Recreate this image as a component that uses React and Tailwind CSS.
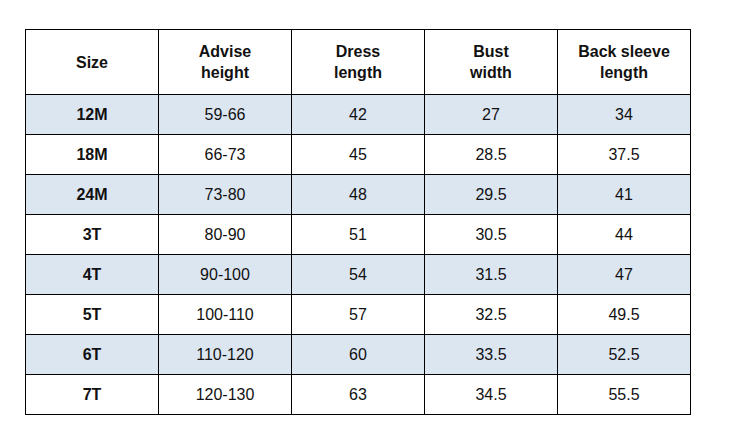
import React from "react";

const rows = [
  ["12M", "59-66", "42", "27", "34"],
  ["18M", "66-73", "45", "28.5", "37.5"],
  ["24M", "73-80", "48", "29.5", "41"],
  ["3T", "80-90", "51", "30.5", "44"],
  ["4T", "90-100", "54", "31.5", "47"],
  ["5T", "100-110", "57", "32.5", "49.5"],
  ["6T", "110-120", "60", "33.5", "52.5"],
  ["7T", "120-130", "63", "34.5", "55.5"],
];

const headers = [["Size"], ["Advise", "height"], ["Dress", "length"], ["Bust", "width"], ["Back sleeve", "length"]];

export default function App() {
  return (
    <div className="w-[739px] h-[441px] bg-white pt-[29px] pl-[25px]" style={{ fontFamily: '"Liberation Sans", Arial, sans-serif' }}>
      <div className="grid grid-cols-[133px_133px_133px_133px_133px] w-[666px] border-l border-t border-black text-[16px] text-[#111]">
        {headers.map((h, i) => (
          <div key={i} className="h-[65px] border-r border-b border-black flex flex-col items-center justify-center font-bold leading-[21px] text-center">
            {h.map((l, j) => (
              <span key={j}>{l}</span>
            ))}
          </div>
        ))}
        {rows.map((r, ri) =>
          r.map((c, ci) => (
            <div
              key={ri + "-" + ci}
              className={
                "h-[40px] border-r border-b border-black flex items-center justify-center " +
                (ri % 2 === 0 ? "bg-[#dce6f1] " : "bg-white ") +
                (ci === 0 ? "font-bold" : "")
              }
            >
              {c}
            </div>
          ))
        )}
      </div>
    </div>
  );
}
